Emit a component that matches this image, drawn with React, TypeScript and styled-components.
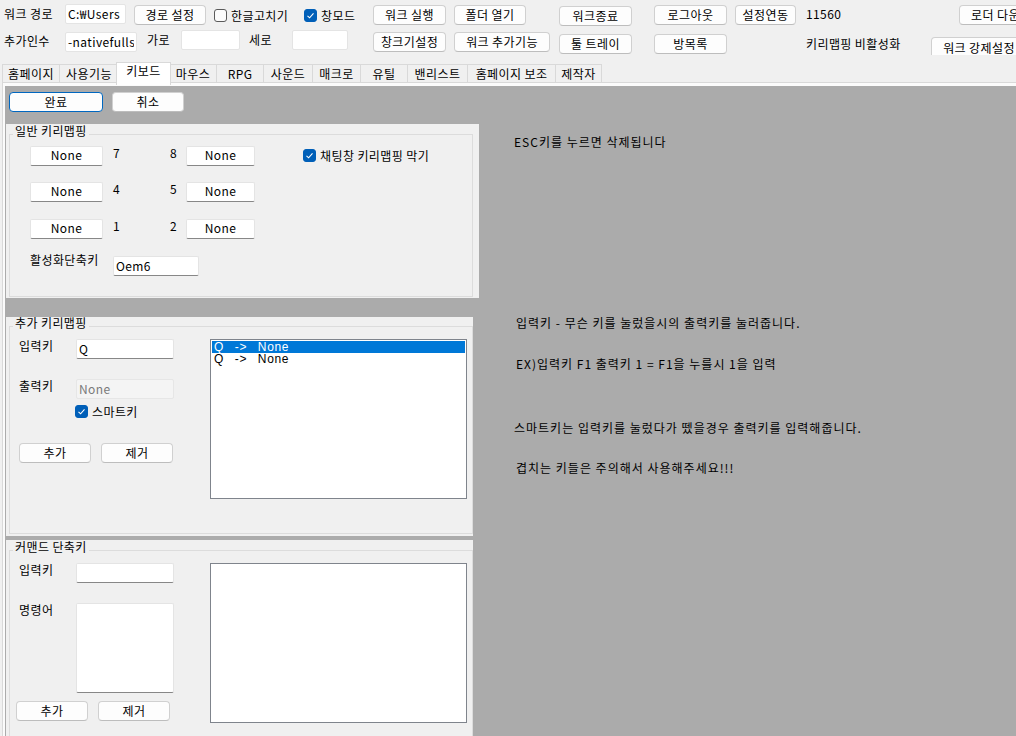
import styled, { createGlobalStyle } from "styled-components";

const GlobalStyle = createGlobalStyle`
    html, body {
        margin: 0;
        padding: 0;
        background: #f0f0f0;
    }
    body {
        font-family: "Noto Sans CJK KR", "Noto Sans", sans-serif;
        font-size: 12px;
        letter-spacing: 0.4px;
        color: #000;
        overflow: hidden;
    }
    * {
        box-sizing: border-box;
    }
`;

type Spot = { $ml?: number; $mt?: number; $w?: number; $h?: number };

const Window = styled.div`
    width: 1016px;
    height: 736px;
    overflow: hidden;
    display: flex;
    flex-direction: column;
    background: #f0f0f0;
`;

const TopBar = styled.div`
    height: 55px;
    flex-shrink: 0;
    overflow: hidden;
    padding-top: 4px;
    display: flex;
    flex-direction: column;
`;

const ToolRow = styled.div<{ $h: number }>`
    height: ${(p) => p.$h}px;
    display: flex;
    flex-direction: row;
    align-items: flex-start;
    flex-shrink: 0;
`;

const Label = styled.div<Spot>`
    width: ${(p) => (p.$w ? `${p.$w}px` : "auto")};
    margin-left: ${(p) => p.$ml ?? 0}px;
    margin-top: ${(p) => p.$mt ?? 0}px;
    line-height: 20px;
    white-space: nowrap;
    flex-shrink: 0;
`;

const TextBox = styled.input<Spot & { $line?: boolean; $center?: boolean }>`
    width: ${(p) => p.$w}px;
    height: 20px;
    margin-left: ${(p) => p.$ml ?? 0}px;
    margin-top: ${(p) => p.$mt ?? 0}px;
    flex-shrink: 0;
    padding: 0 2px ${(p) => (p.$center ? 3 : 1)}px 2px;
    border: 1px solid #e4e4e4;
    border-bottom-color: ${(p) => (p.$line ? "#878787" : "#e4e4e4")};
    border-radius: 2px;
    background: #ffffff;
    font: inherit;
    font-size: 12px;
    letter-spacing: 0.4px;
    line-height: 16px;
    color: #000;
    text-align: ${(p) => (p.$center ? "center" : "left")};
    outline: none;

    &:disabled {
        background: #f4f4f4;
        border-color: #e6e6e6;
        color: #7a7a7a;
    }
`;

const MemoBox = styled.textarea<Spot>`
    width: ${(p) => p.$w}px;
    height: ${(p) => p.$h}px;
    margin-left: ${(p) => p.$ml ?? 0}px;
    flex-shrink: 0;
    border: 1px solid #e4e4e4;
    border-bottom-color: #878787;
    border-radius: 2px;
    background: #ffffff;
    resize: none;
    font: inherit;
    outline: none;
`;

const WinButton = styled.button<Spot & { $primary?: boolean }>`
    width: ${(p) => p.$w}px;
    height: ${(p) => p.$h ?? 20}px;
    margin-left: ${(p) => p.$ml ?? 0}px;
    margin-top: ${(p) => p.$mt ?? 0}px;
    flex-shrink: 0;
    padding: 0 0 1px 0;
    border: 1px solid ${(p) => (p.$primary ? "#0067c0" : "#d0d0d0")};
    border-bottom-color: ${(p) => (p.$primary ? "#0067c0" : "#bdbdbd")};
    border-radius: 4px;
    background: #fdfdfd;
    font: inherit;
    font-size: 12px;
    letter-spacing: 0.4px;
    line-height: 17px;
    color: #000;
    white-space: nowrap;
`;

const CheckWrap = styled.label<Spot>`
    width: ${(p) => (p.$w ? `${p.$w}px` : "auto")};
    margin-left: ${(p) => p.$ml ?? 0}px;
    margin-top: ${(p) => p.$mt ?? 0}px;
    height: 20px;
    flex-shrink: 0;
    display: flex;
    flex-direction: row;
    align-items: center;
    gap: 4px;
    white-space: nowrap;
`;

const CheckMark = styled.span<{ $on?: boolean }>`
    width: 13px;
    height: 13px;
    border-radius: 3px;
    border: 1px solid ${(p) => (p.$on ? "#005fb8" : "#5a5a5a")};
    background: ${(p) => (p.$on ? "#005fb8" : "#fbfbfb")};
    display: flex;
    align-items: center;
    justify-content: center;
    flex-shrink: 0;
`;

const Counter = styled.div`
    width: 153px;
    margin-left: 10px;
    line-height: 20px;
    flex-shrink: 0;
`;

const TabStrip = styled.div`
    height: 27px;
    flex-shrink: 0;
    display: flex;
    flex-direction: row;
    align-items: flex-end;
    padding-left: 2px;
`;

const Tab = styled.div<{ $w: number; $active?: boolean }>`
    width: ${(p) => (p.$active ? p.$w + 4 : p.$w)}px;
    height: ${(p) => (p.$active ? 23 : 18)}px;
    margin: ${(p) => (p.$active ? "0 -2px -3px -2px" : "0")};
    position: relative;
    z-index: ${(p) => (p.$active ? 2 : 1)};
    border: 1px solid #d9d9d9;
    border-bottom: none;
    border-right: ${(p) => (p.$active ? "1px solid #d9d9d9" : "none")};
    background: ${(p) => (p.$active ? "#ffffff" : "#f0f0f0")};
    line-height: ${(p) => (p.$active ? 15 : 17)}px;
    text-align: center;
    white-space: nowrap;
    flex-shrink: 0;

    &:last-child {
        border-right: 1px solid #d9d9d9;
    }
`;

const TabPanel = styled.div`
    flex: 1;
    min-height: 0;
    margin-left: 2px;
    border-top: 1px solid #d9d9d9;
    border-left: 1px solid #d9d9d9;
    background: #fbfbfb;
    padding: 3px 0 0 2px;
    display: flex;
`;

const Page = styled.div`
    flex: 1;
    background: #ababab;
    overflow: hidden;
    display: flex;
    flex-direction: row;
    align-items: flex-start;
`;

const LeftColumn = styled.div`
    width: 475px;
    flex-shrink: 0;
    padding-left: 1px;
    display: flex;
    flex-direction: column;
`;

const ActionRow = styled.div`
    display: flex;
    flex-direction: row;
    margin: 6px 0 0 3px;
`;

const Panel = styled.div<Spot>`
    width: ${(p) => p.$w}px;
    height: ${(p) => p.$h}px;
    margin-top: ${(p) => p.$mt ?? 0}px;
    background: #f0f0f0;
    overflow: hidden;
    flex-shrink: 0;
`;

const Group = styled.fieldset<Spot>`
    width: 464px;
    height: ${(p) => p.$h}px;
    margin: ${(p) => p.$mt ?? 0}px 0 0 3px;
    padding: 0;
    border: 1px solid #dcdcdc;
    min-width: 0;
`;

const Legend = styled.legend`
    margin-left: 3px;
    padding: 0 2px 6px 2px;
    font-size: 12px;
    line-height: 14px;
`;

const GroupBody = styled.div<{ $pt: number }>`
    padding-top: ${(p) => p.$pt}px;
    display: flex;
    flex-direction: row;
    align-items: flex-start;
`;

const KeyGrid = styled.div`
    display: flex;
    flex-direction: column;
    padding-left: 20px;
`;

const KeyRow = styled.div<{ $mt?: number }>`
    display: flex;
    flex-direction: row;
    align-items: flex-start;
    margin-top: ${(p) => p.$mt ?? 0}px;
`;

const NumLabel = styled.div<Spot>`
    width: ${(p) => p.$w}px;
    margin-left: ${(p) => p.$ml ?? 0}px;
    line-height: 12px;
    margin-top: 1px;
    flex-shrink: 0;
`;

const FormColumn = styled.div<{ $ml: number }>`
    width: 160px;
    margin-left: ${(p) => p.$ml}px;
    display: flex;
    flex-direction: column;
    flex-shrink: 0;
`;

const FormRow = styled.div<{ $mt?: number; $ml?: number }>`
    display: flex;
    flex-direction: row;
    align-items: flex-start;
    margin-top: ${(p) => p.$mt ?? 0}px;
    margin-left: ${(p) => p.$ml ?? 0}px;
`;

const FormLabel = styled.div`
    width: 57px;
    line-height: 14px;
    flex-shrink: 0;
`;

const ListBox = styled.div<Spot>`
    width: 257px;
    height: 160px;
    margin-left: ${(p) => p.$ml ?? 0}px;
    border: 1px solid #7f848c;
    background: #ffffff;
    padding: 1px;
    flex-shrink: 0;
`;

const ListItem = styled.div<{ $selected?: boolean }>`
    height: 12px;
    line-height: 12px;
    padding-left: 2px;
    font-family: "Liberation Sans", "Noto Sans CJK KR", sans-serif;
    font-size: 12px;
    letter-spacing: 0.6px;
    word-spacing: 1.5px;
    white-space: pre;
    background: ${(p) => (p.$selected ? "#0078d7" : "transparent")};
    color: ${(p) => (p.$selected ? "#ffffff" : "#000000")};
`;

const HelpColumn = styled.div`
    margin-left: 34px;
    display: flex;
    flex-direction: column;
`;

const HelpLine = styled.div<{ $mt: number; $indent?: number }>`
    margin-top: ${(p) => p.$mt}px;
    padding-left: ${(p) => p.$indent ?? 0}px;
    line-height: 16px;
    letter-spacing: 1px;
    white-space: nowrap;
`;

function Check({ on }: { on?: boolean }) {
    return (
        <CheckMark $on={on}>
            {on ? (
                <svg width="9" height="9" viewBox="0 0 9 9">
                    <polyline points="1.5,4.8 3.6,6.8 7.5,2.4" fill="none" stroke="#ffffff" strokeWidth="1.1" />
                </svg>
            ) : null}
        </CheckMark>
    );
}

const TABS: [string, number][] = [
    ["홈페이지", 57],
    ["사용기능", 59],
    ["키보드", 51],
    ["마우스", 47],
    ["RPG", 47],
    ["사운드", 49],
    ["매크로", 48],
    ["유틸", 47],
    ["밴리스트", 60],
    ["홈페이지 보조", 88],
    ["제작자", 47],
];

const HELP: { text: string; mt: number; indent: number }[] = [
    { text: "ESC키를 누르면 삭제됩니다", mt: 48, indent: 0 },
    { text: "입력키 - 무슨 키를 눌렀을시의 출력키를 눌러줍니다.", mt: 165, indent: 2 },
    { text: "EX)입력키 F1 출력키 1 = F1을 누를시 1을 입력", mt: 25, indent: 2 },
    { text: "스마트키는 입력키를 눌렀다가 뗐을경우 출력키를 입력해줍니다.", mt: 48, indent: 0 },
    { text: "겹치는 키들은 주의해서 사용해주세요!!!", mt: 24, indent: 2 },
];

export default function App() {
    return (
        <Window>
            <GlobalStyle />
            <TopBar>
                <ToolRow $h={26}>
                    <Label $ml={4} $w={61}>워크 경로</Label>
                    <TextBox $w={61} readOnly defaultValue="C:₩Users" />
                    <WinButton $ml={8} $w={72} $mt={1}>경로 설정</WinButton>
                    <CheckWrap $ml={8} $w={90} $mt={1}>
                        <Check />
                        한글고치기
                    </CheckWrap>
                    <CheckWrap $w={69} $mt={1}>
                        <Check on />
                        창모드
                    </CheckWrap>
                    <WinButton $w={73} $mt={1}>워크 실행</WinButton>
                    <WinButton $ml={8} $w={72} $mt={1}>폴더 열기</WinButton>
                    <WinButton $ml={33} $w={73} $mt={2}>워크종료</WinButton>
                    <WinButton $ml={22} $w={73} $mt={1}>로그아웃</WinButton>
                    <WinButton $ml={8} $w={61} $mt={1}>설정연동</WinButton>
                    <Counter>11560</Counter>
                    <WinButton $w={73} $mt={1}>로더 다운</WinButton>
                </ToolRow>
                <ToolRow $h={30}>
                    <Label $ml={4} $w={61} $mt={1}>추가인수</Label>
                    <TextBox $w={72} $mt={2} readOnly defaultValue="-nativefullscreen" />
                    <Label $ml={10} $w={34}>가로</Label>
                    <TextBox $w={59} readOnly defaultValue="" />
                    <Label $ml={9} $w={43}>세로</Label>
                    <TextBox $w={56} readOnly defaultValue="" />
                    <WinButton $ml={25} $w={73} $mt={2}>창크기설정</WinButton>
                    <WinButton $ml={8} $w={96} $mt={2}>워크 추가기능</WinButton>
                    <WinButton $ml={9} $w={73} $mt={4}>툴 트레이</WinButton>
                    <WinButton $ml={22} $w={73} $mt={4}>방목록</WinButton>
                    <Label $ml={79} $w={125} $mt={4}>키리맵핑 비활성화</Label>
                    <WinButton $w={96} $h={22} $mt={7}>워크 강제설정</WinButton>
                </ToolRow>
            </TopBar>

            <TabStrip>
                {TABS.map(([name, width]) => (
                    <Tab key={name} $w={width} $active={name === "키보드"}>
                        {name}
                    </Tab>
                ))}
            </TabStrip>

            <TabPanel>
                <Page>
                    <LeftColumn>
                        <ActionRow>
                            <WinButton $w={94} $primary>완료</WinButton>
                            <WinButton $ml={9} $w={72}>취소</WinButton>
                        </ActionRow>

                        {/* 일반 키리맵핑 */}
                        <Panel $w={473} $h={174} $mt={12}>
                            <Group $h={173} $mt={0}>
                                <Legend>일반 키리맵핑</Legend>
                                <GroupBody $pt={2}>
                                    <KeyGrid>
                                        <KeyRow>
                                            <TextBox $w={73} $line $center readOnly defaultValue="None" />
                                            <NumLabel $ml={10} $w={57}>7</NumLabel>
                                            <NumLabel $w={16}>8</NumLabel>
                                            <TextBox $w={69} $line $center readOnly defaultValue="None" />
                                            <CheckWrap $ml={48} $mt={-1}>
                                                <Check on />
                                                채팅창 키리맵핑 막기
                                            </CheckWrap>
                                        </KeyRow>
                                        <KeyRow $mt={16}>
                                            <TextBox $w={73} $line $center readOnly defaultValue="None" />
                                            <NumLabel $ml={10} $w={57}>4</NumLabel>
                                            <NumLabel $w={16}>5</NumLabel>
                                            <TextBox $w={69} $line $center readOnly defaultValue="None" />
                                        </KeyRow>
                                        <KeyRow $mt={17}>
                                            <TextBox $w={73} $line $center readOnly defaultValue="None" />
                                            <NumLabel $ml={10} $w={57}>1</NumLabel>
                                            <NumLabel $w={16}>2</NumLabel>
                                            <TextBox $w={69} $line $center readOnly defaultValue="None" />
                                        </KeyRow>
                                        <KeyRow $mt={17}>
                                            <Label $w={83} $mt={-6}>활성화단축키</Label>
                                            <TextBox $w={86} $line readOnly defaultValue="Oem6" />
                                        </KeyRow>
                                    </KeyGrid>
                                </GroupBody>
                            </Group>
                        </Panel>

                        {/* 추가 키리맵핑 */}
                        <Panel $w={467} $h={219} $mt={19}>
                            <Group $h={218} $mt={-1}>
                                <Legend>추가 키리맵핑</Legend>
                                <GroupBody $pt={3}>
                                    <FormColumn $ml={9}>
                                        <FormRow>
                                            <FormLabel>입력키</FormLabel>
                                            <TextBox $w={98} $line readOnly defaultValue="Q" />
                                        </FormRow>
                                        <FormRow $mt={20}>
                                            <FormLabel>출력키</FormLabel>
                                            <TextBox $w={98} disabled defaultValue="None" />
                                        </FormRow>
                                        <FormRow $mt={2} $ml={56}>
                                            <CheckWrap>
                                                <Check on />
                                                스마트키
                                            </CheckWrap>
                                        </FormRow>
                                        <FormRow $mt={22}>
                                            <WinButton $w={72}>추가</WinButton>
                                            <WinButton $ml={10} $w={72}>제거</WinButton>
                                        </FormRow>
                                    </FormColumn>
                                    <ListBox $ml={31}>
                                        <ListItem $selected>{"Q  ->  None"}</ListItem>
                                        <ListItem>{"Q  ->  None"}</ListItem>
                                    </ListBox>
                                </GroupBody>
                            </Group>
                        </Panel>

                        {/* 커맨드 단축키 */}
                        <Panel $w={467} $h={220} $mt={4}>
                            <Group $h={230} $mt={0}>
                                <Legend>커맨드 단축키</Legend>
                                <GroupBody $pt={3}>
                                    <FormColumn $ml={9}>
                                        <FormRow>
                                            <FormLabel>입력키</FormLabel>
                                            <TextBox $w={98} $line readOnly defaultValue="" />
                                        </FormRow>
                                        <FormRow $mt={20}>
                                            <FormLabel>명령어</FormLabel>
                                            <MemoBox $w={98} $h={90} readOnly defaultValue="" />
                                        </FormRow>
                                        <FormRow $mt={8} $ml={-3}>
                                            <WinButton $w={72}>추가</WinButton>
                                            <WinButton $ml={10} $w={72}>제거</WinButton>
                                        </FormRow>
                                    </FormColumn>
                                    <ListBox $ml={31} />
                                </GroupBody>
                            </Group>
                        </Panel>
                    </LeftColumn>

                    <HelpColumn>
                        {HELP.map((line) => (
                            <HelpLine key={line.text} $mt={line.mt} $indent={line.indent}>
                                {line.text}
                            </HelpLine>
                        ))}
                    </HelpColumn>
                </Page>
            </TabPanel>
        </Window>
    );
}
